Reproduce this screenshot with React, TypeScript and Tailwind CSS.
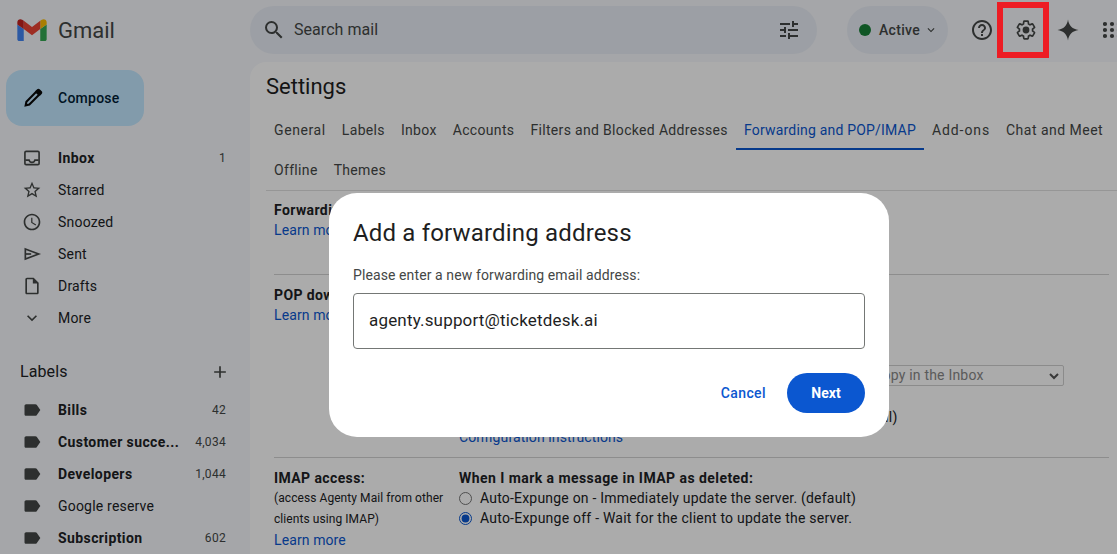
import {
  MdAdd,
  MdExpandMore,
  MdLabel,
  MdOutlineHelpOutline,
  MdOutlineInsertDriveFile,
  MdOutlineSchedule,
  MdOutlineStarBorder,
  MdSearch,
  MdTune,
} from "react-icons/md";

const SentIcon = () => (
  <svg viewBox="0 0 24 24" className="size-5 fill-none stroke-[#444746] stroke-2">
    <path d="M4 6l16 6-16 6v-12z" />
    <path d="M4 12h7" />
  </svg>
);

const InboxIcon = () => (
  <svg viewBox="0 0 24 24" className="size-5 fill-none stroke-[#444746] stroke-2">
    <rect x="3.500" y="4" width="17" height="16" rx="1.500" />
    <path d="M4 14.500h4.500c.5 2 1.800 2.800 3.500 2.800s3-.8 3.500-2.800H20" />
  </svg>
);

const GmailLogo = () => (
  <svg viewBox="0 0 32 24" className="h-[22px] w-[30px]">
    <path fill="#4285f4" d="M2 24h5V11L0 6v16c0 1.100.9 2 2 2z" />
    <path fill="#34a853" d="M25 24h5c1.100 0 2-.9 2-2V6l-7 5z" />
    <path fill="#fbbc04" d="M25 2v9l7-5V3.500C32 .8 28.900-.8 26.700.9z" />
    <path fill="#ea4335" d="M7 11V2l9 6.800L25 2v9l-9 6.800z" />
    <path fill="#c5221f" d="M0 3.500V6l7 5V2L5.300.9C3.100-.8 0 .8 0 3.500z" />
  </svg>
);

const GearIcon = () => (
  <svg viewBox="0 0 24 24" className="size-6">
    <path
      fill="none"
      stroke="#444746"
      strokeWidth="1.900"
      transform="translate(1.440 1.440) scale(0.88)"
      d="M19.430 12.980c.04-.32.07-.64.07-.98 0-.34-.03-.66-.07-.98l2.110-1.650c.19-.15.24-.42.12-.64l-2-3.460c-.09-.16-.26-.25-.44-.25-.06 0-.12.01-.17.03l-2.490 1c-.52-.4-1.080-.73-1.690-.98l-.38-2.650C14.460 2.180 14.250 2 14 2h-4c-.25 0-.46.18-.49.42l-.38 2.650c-.61.25-1.170.59-1.690.98l-2.490-1c-.06-.02-.12-.03-.18-.03-.17 0-.34.09-.43.25l-2 3.460c-.13.22-.07.49.12.64l2.110 1.650c-.04.32-.07.65-.07.98 0 .33.03.66.07.98l-2.110 1.650c-.19.15-.24.42-.12.64l2 3.460c.09.16.26.25.44.25.06 0 .12-.01.17-.03l2.490-1c.52.4 1.080.73 1.690.98l.38 2.650c.03.24.24.42.49.42h4c.25 0 .46-.18.49-.42l.38-2.650c.61-.25 1.170-.59 1.690-.98l2.490 1c.06.02.12.03.18.03.17 0 .34-.09.43-.25l2-3.460c.12-.22.07-.49-.12-.64l-2.110-1.650z"
    />
    <circle cx="12" cy="12" r="3.400" fill="#444746" />
  </svg>
);

const AppsIcon = () => (
  <svg viewBox="0 0 20 18" className="h-[18px] w-[20px] flex-none fill-[#444746]">
    {[2, 9, 16].map((x) =>
      [3, 9, 15].map((y) => <circle key={`${x}-${y}`} cx={x} cy={y} r="2.100" />),
    )}
  </svg>
);

const PencilIcon = () => (
  <svg viewBox="0 0 24 24" className="size-[22px]">
    <path fill="none" stroke="#0a0a0a" strokeWidth="2.300" d="M4 20l.8-4L15.500 5.300l3.200 3.200L8 19.200z" />
    <path fill="#0a0a0a" d="M14.500 4.500l2-2c.8-.8 2-.8 2.800 0l2.200 2.200c.8.800.8 2 0 2.800l-2 2z" />
  </svg>
);

const iconClass = "text-[#444746]";

const folders = [
  { name: "Inbox", count: "1", bold: true, icon: <InboxIcon /> },
  { name: "Starred", icon: <MdOutlineStarBorder className={`size-5 ${iconClass}`} /> },
  { name: "Snoozed", icon: <MdOutlineSchedule className={`size-5 ${iconClass}`} /> },
  { name: "Sent", icon: <SentIcon /> },
  { name: "Drafts", icon: <MdOutlineInsertDriveFile className={`size-5 ${iconClass}`} /> },
  { name: "More", icon: <MdExpandMore className={`size-5 ${iconClass}`} /> },
];

const labels = [
  { name: "Bills", count: "42", bold: true },
  { name: "Customer succe...", count: "4,034", bold: true },
  { name: "Developers", count: "1,044", bold: true },
  { name: "Google reserve" },
  { name: "Subscription", count: "602", bold: true },
];

const tabs = [
  { name: "General", spacing: "tracking-[0.6px]" },
  { name: "Labels", spacing: "tracking-[0.33px]" },
  { name: "Inbox", spacing: "tracking-[0.33px]" },
  { name: "Accounts", spacing: "tracking-[0.33px]" },
  { name: "Filters and Blocked Addresses", spacing: "tracking-[0.33px]" },
  { name: "Forwarding and POP/IMAP", spacing: "tracking-[0.2px]" },
  { name: "Add-ons", spacing: "tracking-[0.9px]" },
  { name: "Chat and Meet", spacing: "tracking-[0.48px]" },
  { name: "Offline", spacing: "tracking-[0.33px]" },
  { name: "Themes", spacing: "tracking-[0.33px]" },
];

type RowProps = {
  icon: React.ReactNode;
  name: string;
  count?: string;
  bold?: boolean;
};

const NavRow = ({ icon, name, count, bold }: RowProps) => (
  <div className="flex h-8 items-center pl-[22px] pr-[24px]">
    <div className="mr-[16px] flex w-[20px] flex-none items-center justify-center">{icon}</div>
    <span
      className={`flex-1 truncate text-[14px] text-[#202124] ${
        bold ? "font-bold tracking-[0.4px]" : "tracking-[0.2px]"
      }`}
    >
      {name}
    </span>
    {count && <span className="ml-2 text-[12px] tracking-[0.3px] text-[#444746]">{count}</span>}
  </div>
);

export default function App() {
  return (
    <div className="relative h-[554px] w-[1117px] overflow-hidden bg-[#f6f8fc] font-['Roboto',sans-serif]">
      <header className="flex h-[60px] items-center">
        <div className="flex w-[250px] flex-none items-center gap-[11px] pl-[17px]">
          <GmailLogo />
          <span className="text-[22px] text-[#444746]">Gmail</span>
        </div>
        <div className="flex h-[48px] w-[567px] flex-none items-center rounded-full bg-[#e9eef6] pl-[12px] pr-[16px]">
          <MdSearch className="size-6 text-[#444746]" />
          <span className="ml-[8px] flex-1 text-[16px] tracking-[0.05px] text-[#444746]">Search mail</span>
          <MdTune className="size-6 text-[#444746]" />
        </div>
        <div className="ml-[30px] flex h-[48px] w-[101px] flex-none items-center rounded-full bg-[#e9eef6] pl-[12px]">
          <span className="size-3 rounded-full bg-[#188038]" />
          <span className="ml-[8px] text-[14px] font-medium tracking-[0.3px] text-[#444746]">Active</span>
          <MdExpandMore className="ml-[4px] size-[14px] text-[#444746]" />
        </div>
        <div className="ml-[22px] flex flex-none items-center">
          <MdOutlineHelpOutline className="size-6 text-[#444746]" />
          <div className="ml-[20px]">
            <GearIcon />
          </div>
          <svg viewBox="0 0 24 24" className="ml-[18px] size-6 fill-[#444746]">
            <path d="M12 1.500c.8 6 4.500 9.700 10.500 10.500-6 .8-9.700 4.500-10.500 10.500-.8-6-4.500-9.700-10.500-10.500 6-.8 9.700-4.500 10.500-10.500z" />
          </svg>
          <div className="ml-[23px]">
            <AppsIcon />
          </div>
        </div>
      </header>

      <div className="flex h-[494px]">
        <aside className="w-[250px] flex-none">
          <div className="ml-[6px] mt-[10px] flex h-[56px] w-[138px] items-center rounded-2xl bg-[#c2e7ff] pl-[16px]">
            <PencilIcon />
            <span className="ml-[14px] text-[14px] font-medium tracking-[0.25px] text-[#001d35]">Compose</span>
          </div>
          <nav className="mt-[16px]">
            {folders.map((folder) => (
              <NavRow key={folder.name} {...folder} />
            ))}
          </nav>
          <div className="mt-[22px] flex h-[32px] items-center justify-between pl-[20px] pr-[20px]">
            <span className="text-[16px] tracking-[0.1px] text-[#202124]">Labels</span>
            <MdAdd className="size-5 text-[#444746]" />
          </div>
          <nav className="mt-[6px]">
            {labels.map((label) => (
              <NavRow
                key={label.name}
                {...label}
                icon={<MdLabel className="size-[20px] text-[#444746]" />}
              />
            ))}
          </nav>
        </aside>

        <main className="mt-[2px] min-w-0 flex-1 rounded-tl-2xl bg-white pl-[16px] text-[14px] text-[#202124]">
          <h1 className="pt-[10px] text-[22px] leading-[30px] text-[#1f1f1f]">Settings</h1>
          <div className="mt-[11px] flex flex-wrap gap-y-[3px] border-b border-[#e0e0e0]">
            {tabs.map((tab) => {
              const active = tab.name === "Forwarding and POP/IMAP";
              return (
                <div
                  key={tab.name}
                  className={`flex h-[37px] items-center whitespace-nowrap border-b-2 px-[8px] ${tab.spacing} ${
                    active ? "border-[#0b57d0] text-[#0b57d0]" : "border-transparent text-[#444746]"
                  }`}
                >
                  {tab.name}
                </div>
              );
            })}
          </div>

          <section className="mx-[8px] h-[84px] border-b border-[#d3d3d3] pt-[9px]">
            <div className="font-bold leading-[20px] tracking-[0.4px]">Forwarding:</div>
            <div className="leading-[20px] tracking-[0.1px] text-[#0b57d0]">Learn more</div>
          </section>

          <section className="mx-[8px] flex h-[183px] border-b border-[#d3d3d3] pt-[10px]">
            <div className="w-[185px] flex-none">
              <div className="font-bold leading-[20px] tracking-[0.4px]">POP download:</div>
              <div className="leading-[20px] tracking-[0.1px] text-[#0b57d0]">Learn more</div>
            </div>
            <div className="min-w-0 flex-1">
              <div className="mt-[80px] flex justify-end pr-[45px]">
                <div className="flex h-[21px] w-[317px] items-center justify-between rounded-[2px] border border-[#cfcfcf] pl-[4px] pr-[3px] tracking-[0.2px] text-[#888]">
                  <span className="whitespace-nowrap">keep Agenty Mail's copy in the Inbox</span>
                  <svg viewBox="0 0 12 12" className="size-[12px] fill-none stroke-[#555] stroke-[2]">
                    <path d="M2 4l4 4 4-4" />
                  </svg>
                </div>
              </div>
              <div className="mt-[21px] whitespace-nowrap leading-[20px] tracking-[0.36px]">
                3. Configure your email client (e.g. Outlook, Eudora, Netscape Mail)
              </div>
              <div className="leading-[20px] tracking-[0.1px] text-[#0b57d0]">Configuration instructions</div>
            </div>
          </section>

          <section className="mx-[8px] flex pt-[10px]">
            <div className="w-[185px] flex-none">
              <div className="font-bold leading-[20px] tracking-[0.4px]">IMAP access:</div>
              <div className="text-[12px] leading-[21px] tracking-[0.07px]">
                (access Agenty Mail from other
                <br />
                clients using IMAP)
              </div>
              <div className="leading-[20px] tracking-[0.1px] text-[#0b57d0]">Learn more</div>
            </div>
            <div className="min-w-0 flex-1">
              <div className="font-bold leading-[20px] tracking-[0.44px]">
                When I mark a message in IMAP as deleted:
              </div>
              <label className="flex h-[20px] items-center">
                <input type="radio" name="expunge" className="size-[13px] flex-none" readOnly />
                <span className="ml-[8px] whitespace-nowrap tracking-[0.2px]">
                  Auto-Expunge on - Immediately update the server. (default)
                </span>
              </label>
              <label className="flex h-[20px] items-center">
                <input type="radio" name="expunge" className="size-[13px] flex-none accent-[#0b57d0]" defaultChecked />
                <span className="ml-[8px] whitespace-nowrap tracking-[0.23px]">
                  Auto-Expunge off - Wait for the client to update the server.
                </span>
              </label>
            </div>
          </section>
        </main>
      </div>

      <div className="absolute inset-0 bg-black/[.33]" />

      <div className="absolute left-[997px] top-[2px] h-[56px] w-[52px] border-[6px] border-[#ed1c24]" />

      <div className="absolute left-[329px] top-[193px] h-[244px] w-[560px] rounded-[28px] bg-white px-[24px] pt-[24px]">
        <h2 className="text-[24px] leading-[32px] tracking-[0.17px] text-[#1f1f1f]">Add a forwarding address</h2>
        <p className="mt-[16px] text-[14px] leading-[20px] tracking-[0.1px] text-[#444746]">
          Please enter a new forwarding email address:
        </p>
        <div className="mt-[8px] flex h-[56px] items-center rounded-[4px] border border-[#747775] px-[15px] text-[17px] tracking-[0.18px] text-[#1f1f1f]">
          agenty.support@ticketdesk.ai
        </div>
        <div className="mt-[24px] flex items-center justify-end">
          <span className="text-[14px] font-medium tracking-[0.4px] text-[#0b57d0]">Cancel</span>
          <span className="ml-[21px] flex h-[40px] w-[78px] items-center justify-center rounded-full bg-[#0b57d0] text-[14px] font-bold text-white">
            Next
          </span>
        </div>
      </div>
    </div>
  );
}
